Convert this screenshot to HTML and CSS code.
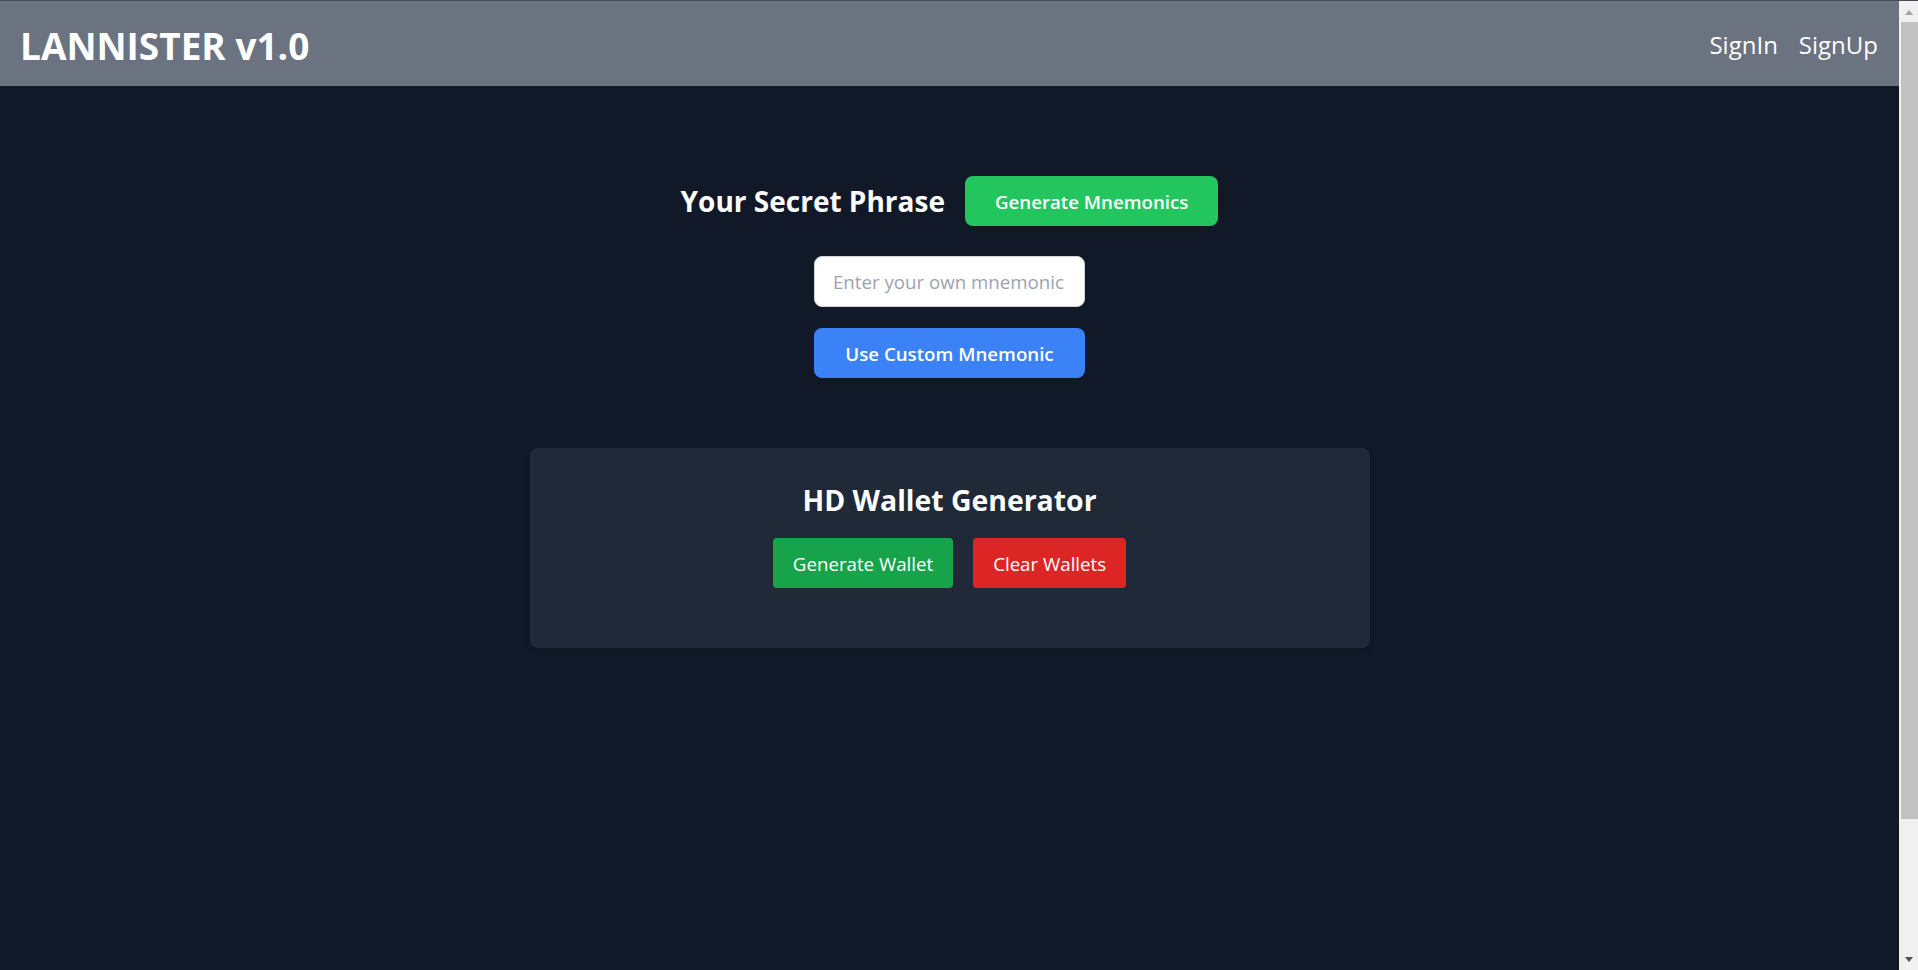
FILE: index.html
```html
<!DOCTYPE html>
<html lang="en">
<head>
<meta charset="utf-8">
<title>LANNISTER v1.0</title>
<link rel="stylesheet" href="styles.css">
</head>
<body>
<div class="app">
  <div class="page">
    <header class="topbar">
      <h1 class="brand">LANNISTER v1.0</h1>
      <nav class="nav">
        <a class="nav-link" href="#">SignIn</a>
        <a class="nav-link" href="#">SignUp</a>
      </nav>
    </header>
    <main class="main">
      <section class="phrase">
        <div class="phrase-head">
          <h2 class="phrase-title">Your Secret Phrase</h2>
          <button class="btn btn-mnemonic" type="button">Generate Mnemonics</button>
        </div>
        <div class="custom">
          <input class="custom-input" type="text" placeholder="Enter your own mnemonic">
          <button class="btn btn-custom" type="button">Use Custom Mnemonic</button>
        </div>
      </section>
      <section class="card">
        <h2 class="card-title">HD Wallet Generator</h2>
        <div class="card-actions">
          <button class="btn btn-wallet" type="button">Generate Wallet</button>
          <button class="btn btn-clear" type="button">Clear Wallets</button>
        </div>
      </section>
    </main>
  </div>
  <div class="scrollbar">
    <div class="sb-up"><span class="tri tri-up"></span></div>
    <div class="sb-thumb"></div>
    <div class="sb-down"><span class="tri tri-down"></span></div>
  </div>
</div>
</body>
</html>
```

FILE: styles.css
```css
* {
  box-sizing: border-box;
}

html, body {
  margin: 0;
  padding: 0;
  height: 100%;
  overflow: hidden;
}

body {
  font-family: "Open Sans", "Noto Sans", sans-serif;
  background: #111827;
  color: #ffffff;
}

.app {
  display: flex;
  height: 970px;
  border-top: 1px solid #464a52;
}

.page {
  flex: 1;
  display: flex;
  flex-direction: column;
  min-width: 0;
}

.topbar {
  height: 85px;
  background: #6b7280;
  display: flex;
  align-items: center;
  justify-content: space-between;
  padding: 3px 21px 0 20px;
}

.brand {
  margin: 0;
  font-size: 37px;
  line-height: 1;
  font-weight: 700;
  color: #ffffff;
}

.nav {
  display: flex;
  gap: 21px;
}

.nav-link {
  color: #ffffff;
  text-decoration: none;
  font-size: 24px;
  line-height: 1;
}

.main {
  flex: 1;
  padding-top: 90px;
  display: flex;
  flex-direction: column;
  align-items: center;
}

.phrase {
  display: flex;
  flex-direction: column;
  align-items: center;
}

.phrase-head {
  display: flex;
  align-items: center;
  gap: 20px;
  height: 50px;
}

.phrase-title {
  margin: 0;
  font-size: 28px;
  line-height: 36px;
  font-weight: 700;
}

.btn {
  border: 0;
  color: #ffffff;
  font-family: inherit;
  height: 50px;
  cursor: pointer;
  display: inline-flex;
  align-items: center;
  justify-content: center;
  white-space: nowrap;
}

.btn-mnemonic {
  background: #22c55e;
  border-radius: 8px;
  padding: 0 30px;
  font-size: 18.7px;
  font-weight: 600;
}

.custom {
  margin-top: 30px;
  display: flex;
  flex-direction: column;
  align-items: center;
  gap: 21px;
}

.custom-input {
  width: 271px;
  height: 51px;
  border: 1px solid #d1d5db;
  border-radius: 8px;
  background: #ffffff;
  padding: 0 10px 0 18px;
  font-family: inherit;
  font-size: 18.7px;
  color: #111827;
  outline: none;
}

.custom-input::placeholder {
  color: #9ca3af;
}

.btn-custom {
  width: 271px;
  background: #3b82f6;
  border-radius: 8px;
  font-size: 18.7px;
  font-weight: 600;
}

.card {
  margin-top: 70px;
  width: 840px;
  background: #1f2937;
  border-radius: 8px;
  padding: 34px 0 60px;
  text-align: center;
  box-shadow: 0 4px 6px -1px rgba(0, 0, 0, 0.1), 0 2px 4px -2px rgba(0, 0, 0, 0.1);
}

.card-title {
  margin: 0;
  font-size: 28.4px;
  line-height: 36px;
  font-weight: 700;
}

.card-actions {
  margin-top: 20px;
  display: flex;
  justify-content: center;
  gap: 20px;
}

.btn-wallet,
.btn-clear {
  border-radius: 4px;
  padding: 0 20px;
  font-size: 18.7px;
  font-weight: 400;
}

.btn-wallet {
  background: #16a34a;
}

.btn-clear {
  background: #dc2626;
}

/* fake window scrollbar */
.scrollbar {
  width: 19px;
  background: #f0f0f0;
  display: flex;
  flex-direction: column;
}

.sb-up {
  height: 21px;
  display: flex;
  justify-content: center;
  padding-top: 9px;
}

.sb-thumb {
  height: 797px;
  margin-left: 2px;
  background: #c1c1c1;
}

.sb-down {
  margin-top: auto;
  height: 19px;
  display: flex;
  justify-content: center;
  padding-top: 6px;
}

.tri {
  width: 0;
  height: 0;
  border-left: 4.5px solid transparent;
  border-right: 4.5px solid transparent;
}

.tri-up {
  border-bottom: 5px solid #a3a3a3;
}

.tri-down {
  border-top: 5px solid #505050;
}
```
